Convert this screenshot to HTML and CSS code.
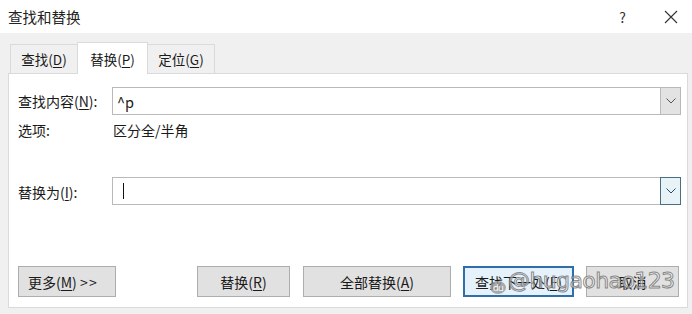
FILE: index.html
```html
<!DOCTYPE html>
<html lang="zh">
<head>
<meta charset="utf-8">
<link rel="stylesheet" href="styles.css">
</head>
<body>
<div class="dialog">
  <div class="titlebar">
    <div class="title">查找和替换</div>
    <div class="controls">
      <span class="help">?</span>
      <svg class="close" width="14" height="14" viewBox="0 0 14 14"><path d="M1 1L13 13M13 1L1 13" stroke="#333" stroke-width="1.1" fill="none"/></svg>
    </div>
  </div>
  <div class="tabs">
    <div class="tab">查找(<u>D</u>)</div>
    <div class="tab active">替换(<u>P</u>)</div>
    <div class="tab">定位(<u>G</u>)</div>
  </div>
  <div class="panel">
    <div class="row">
      <div class="label">查找内容(<u>N</u>):</div>
      <div class="field">
        <div class="value">^p</div>
        <div class="drop"><svg width="10" height="6" viewBox="0 0 10 6"><path d="M0.5 0.5L5 5L9.5 0.5" stroke="#555" fill="none"/></svg></div>
      </div>
    </div>
    <div class="row opts">
      <div class="label">选项:</div>
      <div class="optval">区分全/半角</div>
    </div>
    <div class="row replace">
      <div class="label">替换为(<u>I</u>):</div>
      <div class="field">
        <div class="value"><span class="caret"></span></div>
        <div class="drop hot"><svg width="10" height="6" viewBox="0 0 10 6"><path d="M0.5 0.5L5 5L9.5 0.5" stroke="#2b4d63" fill="none"/></svg></div>
      </div>
    </div>
    <div class="buttons">
      <div class="btn more">更多(<u>M</u>) <span class="gt">&gt; &gt;</span></div>
      <div class="btn b-rep">替换(<u>R</u>)</div>
      <div class="btn b-all">全部替换(<u>A</u>)</div>
      <div class="btn b-next focus">查找下一处(<u>F</u>)</div>
      <div class="btn b-cancel">取消</div>
    </div>
  </div>
  <div class="watermark"><span class="wm-logo">du</span>@hugaohao123</div>
</div>
</body>
</html>
```

FILE: styles.css
```css
* { box-sizing: border-box; }
html, body { margin: 0; padding: 0; }
body {
  font-family: "Microsoft YaHei", "Noto Sans CJK SC", "Noto Sans", sans-serif;
  font-size: 14px;
  color: #1a1a1a;
  background: #f0f0f0;
}
u { text-decoration: underline; text-underline-offset: 2px; }
.dialog {
  position: relative;
  width: 692px;
  height: 314px;
  background: #f0f0f0;
  overflow: hidden;
}
.titlebar {
  height: 33px;
  background: #fff;
  display: flex;
  align-items: center;
  justify-content: space-between;
  padding: 0 14px 0 8px;
}
.title { font-size: 14.5px; color: #222; }
.controls { display: flex; align-items: center; gap: 38px; }
.help { font-size: 14px; color: #333; }
.tabs {
  display: flex;
  padding-left: 10px;
  margin-top: 11px;
  height: 29px;
  align-items: flex-end;
}
.tab {
  height: 29px;
  padding: 0 6px;
  display: flex;
  align-items: center;
  justify-content: center;
  border: 1px solid #dadada;
  border-bottom: none;
  margin-right: -1px;
  background: #f0f0f0;
  font-size: 13.5px;
  width: 68px;
}
.tab.active {
  background: #fff;
  height: 32px;
  margin-bottom: -1px;
  position: relative;
  z-index: 1;
  width: 71px;
}
.panel {
  margin: 0 4px 0 8px;
  height: 235px;
  background: #fff;
  border: 1px solid #dadada;
  padding: 13px 6px 0 9px;
  display: flex;
  flex-direction: column;
}
.row { display: flex; align-items: center; }
.label { width: 94px; flex: none; }
.field {
  flex: 1;
  height: 28px;
  border: 1px solid #b9b9b9;
  display: flex;
  background: #fff;
}
.value {
  flex: 1;
  display: flex;
  align-items: center;
  padding-left: 4px;
  font-size: 14.5px;
}
.drop {
  width: 20px;
  background: #e3e3e3;
  border-left: 1px solid #b9b9b9;
  display: flex;
  align-items: center;
  justify-content: center;
}
.drop.hot {
  background: #e8f3f8;
  border: 1px solid #4a6f82;
  margin: -1px -1px -1px 0;
  width: 21px;
}
.opts { margin-top: 2px; height: 26px; }
.optval { padding-left: 1px; }
.replace { margin-top: 34px; }
.replace .label { padding-top: 2px; }
.caret {
  display: block;
  width: 1px;
  height: 16px;
  background: #111;
  margin-left: 6px;
}
.buttons {
  display: flex;
  margin-top: 61px;
  height: 31px;
}
.btn {
  height: 31px;
  background: #e1e1e1;
  border: 1px solid #adadad;
  display: flex;
  align-items: center;
  justify-content: center;
  white-space: pre;
}
.gt { letter-spacing: -1px; }
.more { width: 98px; justify-content: flex-start; padding-left: 9px; }
.b-rep { width: 93px; margin-left: 81px; }
.b-all { width: 148px; margin-left: 13px; }
.b-next { width: 111px; margin-left: 12px; }
.b-next.focus { border: 2px solid #2f6ea8; background: #e5f1fb; }
.b-cancel { width: 93px; margin-left: 12px; }
.watermark {
  position: absolute;
  left: 490px;
  top: 267px;
  font-family: "DejaVu Sans", sans-serif;
  font-size: 22px;
  color: rgba(255,255,255,0.55);
  -webkit-text-stroke: 1px rgba(110,110,110,0.8);
  letter-spacing: -0.6px;
  display: flex;
  align-items: center;
  white-space: nowrap;
}
.wm-logo {
  font-size: 9px;
  -webkit-text-stroke: 0;
  color: #fff;
  background: rgba(150,150,150,0.8);
  border-radius: 50%;
  width: 16px;
  height: 13px;
  display: inline-flex;
  align-items: center;
  justify-content: center;
  margin-right: 2px;
  margin-top: 14px;
}
```
